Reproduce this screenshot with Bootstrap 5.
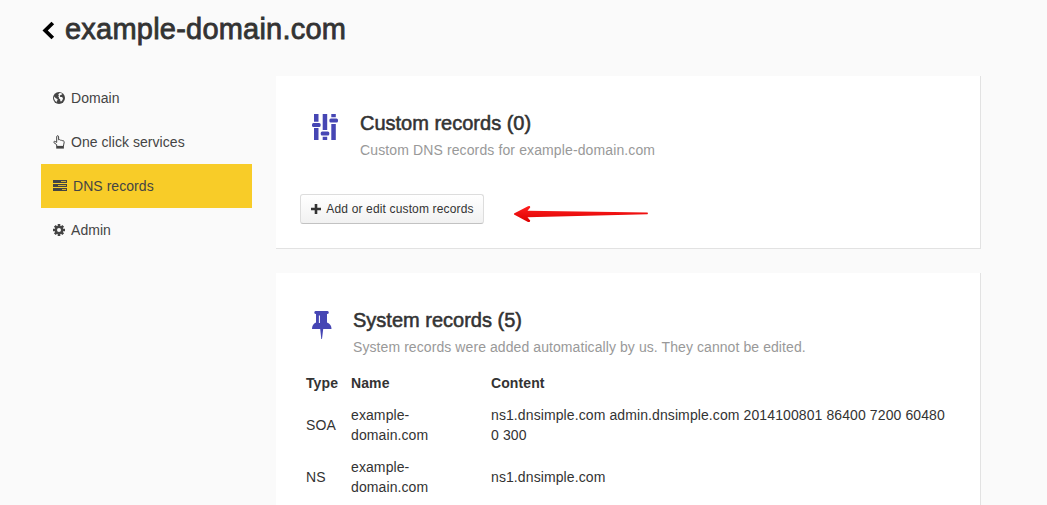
<!DOCTYPE html>
<html lang="en">
<head>
<meta charset="utf-8">
<meta name="viewport" content="width=device-width, initial-scale=1">
<title>example-domain.com</title>
<link rel="stylesheet" href="https://cdn.jsdelivr.net/npm/bootstrap@5.3.0/dist/css/bootstrap.min.css">
<style>
body{font-family:"Liberation Sans",Arial,sans-serif;font-size:14px;line-height:20px;background:#fafafa;color:#333;height:505px;overflow:hidden}
.page{width:940px;margin-left:41px}
.page-head{height:76px;padding-top:9px}
.page-head h1{font-size:29px;line-height:40px;color:#333;font-weight:400;letter-spacing:.22px;-webkit-text-stroke:.8px #333}
.back-link{height:40px}
.back{width:13px;height:19px;margin:3px 10px 0 1px}
.side{width:211px}
.side .nav-link{height:44px;padding:0 12px;color:#444;border-radius:0;letter-spacing:.05px}
.side .nav-link.active{background:#f8cc28;color:#444}
.side svg{margin-right:6px}
.panel{background:#fff;border:0 solid #e2e2e2;border-width:0 1px 1px 0;border-radius:0;width:705px;padding:34px 24px 0}
.panel-custom{height:173px}
.panel-system{height:232px;border-bottom:0}
.panel h2{font-size:20px;line-height:26px;font-weight:400;color:#333;-webkit-text-stroke:.55px #333}
.sliders{margin:4px 22px 0 12px}
.pin{margin:4px 21px 0 12px}
.actions{margin-top:34px}
.arrow{margin:10px 0 0 29px}
.sub{color:#999;letter-spacing:.12px}
.panel-system .sub{letter-spacing:.08px}
.btn-rec{height:30px;width:184px;padding:0 0 1px 1px;font-size:12px;color:#333;border:1px solid #ddd;border-bottom-color:#c2c2c2;border-radius:3px;background:linear-gradient(#fff,#f1f1f1);white-space:nowrap;letter-spacing:.15px}
.btn-rec svg{margin-right:5px}
.records{width:657px;margin-top:10px;table-layout:fixed;color:#333;letter-spacing:.1px}
.records th,.records td{padding:6px;vertical-align:middle;white-space:nowrap}
</style>
</head>
<body>
<div class="page">
  <header class="page-head d-flex align-items-start">
    <a href="#" class="back-link d-flex align-items-center" aria-label="Back"><svg class="back" viewBox="0 0 13 19"><path d="M10.800 2 3.200 9.500l7.600 7.500" fill="none" stroke="#000" stroke-width="3.800"/></svg></a>
    <h1 class="m-0">example-domain.com</h1>
  </header>
  <div class="d-flex gap-4 align-items-start">
    <nav class="side nav flex-column flex-shrink-0">
      <a class="nav-link d-flex align-items-center" href="#"><svg width="12" height="12" viewBox="0 0 12 12"><circle cx="6" cy="6" r="6" fill="#444"/><path d="M6.200 1.200 8 1l1.300 1-.8.8-1 .2-.8 1.100.6 1 1.500-.2 1.200 1-.5 2-1.300 1.600-.8-.3-.3-2-1.300-.9.2-1.500L5 4.600 6 3.200 5.200 2.500zM1.300 4.500l1.500 1.700 1.600.7.3 1-1 1.200.2 1.500L2 8.800 1 6.500z" fill="#fafafa"/></svg>Domain</a>
      <a class="nav-link d-flex align-items-center" href="#"><svg width="12" height="14" viewBox="0 0 12 14"><path d="M3.700 11.200V9.700L.9 7.600c-.5-1 .5-1.600 1.300-1.100l1.500.9V1.800c0-1.500 1.900-1.500 1.900 0v3c.7-.4 1.400-.2 1.700.4.700-.3 1.400 0 1.700.6 1-.4 2.200 0 2.200 1.300 0 1.500-.8 2.500-.8 4.100" fill="none" stroke="#444" stroke-width="1"/><path d="M3.200 10.900h7.700v2.700H3.200z" fill="#444"/></svg>One click services</a>
      <a class="nav-link active d-flex align-items-center" href="#"><svg width="14" height="12" viewBox="0 0 14 12"><path d="M0 0h14v3H0zM0 4h14v3H0zM0 8h14v3H0z" fill="#444"/><path d="M8 1.500h5M5 5.500h8M9 9.500h4" stroke="#f8cc28" stroke-width=".8"/></svg>DNS records</a>
      <a class="nav-link d-flex align-items-center" href="#"><svg width="12" height="12" viewBox="0 0 12 12"><g stroke="#444" stroke-width="2.600"><path d="M6 0v12M0 6h12M1.800 1.800l8.400 8.400M10.200 1.800l-8.400 8.400"/></g><circle cx="6" cy="6" r="4.300" fill="#444"/><circle cx="6" cy="6" r="2" fill="#fafafa"/></svg>Admin</a>
    </nav>
    <main class="d-flex flex-column gap-4">
      <section class="panel panel-custom">
        <div class="d-flex">
          <svg class="sliders" width="26" height="26" viewBox="0 0 26 26" fill="#4646b4"><path d="M2 0h4.500v7.800H2zM2 14h4.500v12H2zM10.700 0h4.500v16h-4.500zM10.700 22.800h4.500V26h-4.500zM19.300 0h4.500v3.300h-4.500zM19.300 10h4.500v16h-4.500z"/><rect y="8.900" width="8.600" height="4" rx="1.500"/><rect x="8.700" y="17.400" width="8.600" height="4" rx="1.500"/><rect x="17.400" y="4.600" width="8.600" height="4" rx="1.500"/></svg>
          <div><h2 class="m-0">Custom records (0)</h2><p class="sub m-0 mt-1">Custom DNS records for example-domain.com</p></div>
        </div>
        <div class="actions d-flex align-items-start">
          <button class="btn btn-rec d-flex align-items-center justify-content-center" type="button"><svg width="10" height="10" viewBox="0 0 10 10"><path d="M5 0v10M0 5h10" stroke="#333" stroke-width="2.600"/></svg><span>Add or edit custom records</span></button>
          <svg class="arrow" width="137" height="20" viewBox="0 0 137 20"><defs><linearGradient id="red" x2="0" y2="1"><stop stop-color="#ff2020"/><stop offset="1" stop-color="#dc0000"/></linearGradient></defs><path d="M1 9.600 15 2.200q2.500-.7 2.200 1.200L14.500 6.700 134.500 8.600q1 .8 0 1.700L14.500 13.200l2.700 3.300q.3 2-2.200 1.500L1 10.600z" fill="url(#red)"/></svg>
        </div>
      </section>
      <section class="panel panel-system">
        <div class="d-flex">
          <svg class="pin" width="20" height="28" viewBox="0 0 20 28"><path fill="#4646b4" d="M3.500 0h12q1.300 0 1.300 1.500T15 3v8.500q4.500 1.800 4.500 6.500h-8.300L10 28h-.7L8.200 18H0q0-4.700 4-6.500V3Q2.300 3 2.300 1.500T3.500 0z"/><path d="M7.400 4.500v7.500" stroke="#fff" stroke-width="1"/></svg>
          <div><h2 class="m-0">System records (5)</h2><p class="sub m-0 mt-1">System records were added automatically by us. They cannot be edited.</p></div>
        </div>
        <table class="records">
          <colgroup><col style="width:45px"><col style="width:140px"><col></colgroup>
          <thead><tr><th>Type</th><th>Name</th><th>Content</th></tr></thead>
          <tbody>
            <tr><td>SOA</td><td>example-<br>domain.com</td><td>ns1.dnsimple.com admin.dnsimple.com 2014100801 86400 7200 60480<br>0 300</td></tr>
            <tr><td>NS</td><td>example-<br>domain.com</td><td>ns1.dnsimple.com</td></tr>
          </tbody>
        </table>
      </section>
    </main>
  </div>
</div>
<script src="https://cdn.jsdelivr.net/npm/bootstrap@5.3.0/dist/js/bootstrap.bundle.min.js"></script>
</body>
</html>
